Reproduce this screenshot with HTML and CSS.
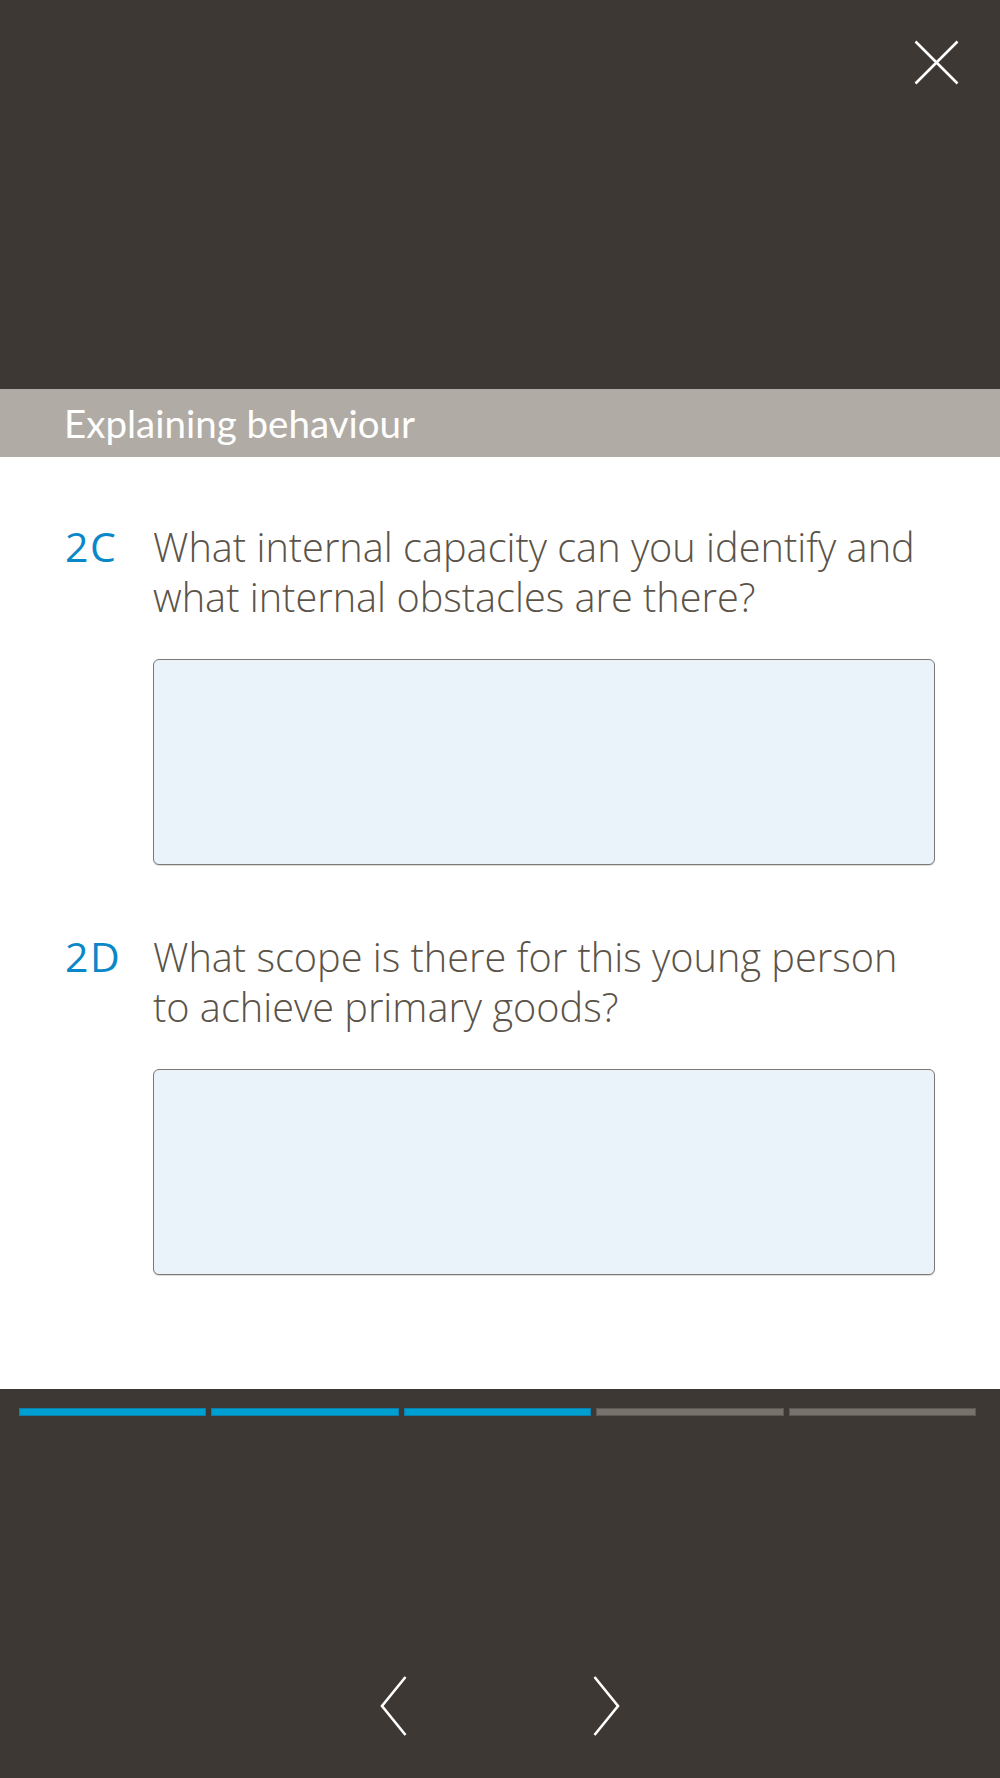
FILE: index.html
```
<!DOCTYPE html>
<html lang="en">
<head>
<meta charset="utf-8">
<title>Explaining behaviour</title>
<link rel="stylesheet" href="styles.css">
</head>
<body>
<div class="screen">
  <header class="top">
    <button class="close" aria-label="Close">
      <svg width="45" height="45" viewBox="0 0 45 45"><path d="M1.5 1.5 L43.5 43.5 M43.5 1.5 L1.5 43.5" stroke="#fff" stroke-width="2.6" fill="none"/></svg>
    </button>
  </header>
  <div class="section-bar">Explaining behaviour</div>
  <main class="content">
    <div class="question">
      <div class="q-num">2C</div>
      <div class="q-body">
        <p class="q-text">What internal capacity can you identify and what internal obstacles are there?</p>
        <textarea class="answer"></textarea>
      </div>
    </div>
    <div class="question">
      <div class="q-num">2D</div>
      <div class="q-body">
        <p class="q-text">What scope is there for this young person to achieve primary goods?</p>
        <textarea class="answer"></textarea>
      </div>
    </div>
  </main>
  <footer class="bottom">
    <div class="progress">
      <span class="seg done"></span>
      <span class="seg done"></span>
      <span class="seg done"></span>
      <span class="seg"></span>
      <span class="seg"></span>
    </div>
    <nav class="nav">
      <button class="arrow" aria-label="Previous">
        <svg width="27" height="60" viewBox="0 0 27 60"><polyline points="25.5,1 2,30 25.5,59" stroke="#fff" stroke-width="2.6" fill="none"/></svg>
      </button>
      <button class="arrow" aria-label="Next">
        <svg width="27" height="60" viewBox="0 0 27 60"><polyline points="1.5,1 25,30 1.5,59" stroke="#fff" stroke-width="2.6" fill="none"/></svg>
      </button>
    </nav>
  </footer>
</div>
</body>
</html>
```
FILE: styles.css
```
* { box-sizing: border-box; }
html, body { margin: 0; padding: 0; }
body {
  background: #ffffff;
  font-family: "Open Sans", "Noto Sans", sans-serif;
}
.screen {
  width: 1000px;
  min-height: 1778px;
  display: flex;
  flex-direction: column;
}
.top {
  height: 389px;
  background: #3d3833;
  display: flex;
  justify-content: flex-end;
  align-items: flex-start;
  padding: 40px 41px 0 0;
}
.close, .arrow {
  background: none;
  border: 0;
  padding: 0;
  margin: 0;
  display: block;
  line-height: 0;
  cursor: pointer;
}
.section-bar {
  height: 68px;
  background: #b1aba5;
  color: #ffffff;
  font-family: "Lato", "Open Sans", sans-serif;
  font-size: 38.5px;
  line-height: 68px;
  padding-left: 64px;
}
.content {
  height: 932px;
  padding: 64px 65px 0 65px;
  display: flex;
  flex-direction: column;
  gap: 66px;
}
.question {
  display: flex;
  align-items: baseline;
}
.q-num {
  width: 88px;
  flex: none;
  color: #0a87c8;
  font-size: 41px;
  letter-spacing: 1.5px;
  line-height: 50px;
}
.q-body {
  flex: 1;
  display: flex;
  flex-direction: column;
}
.q-text {
  margin: 0 0 37px 0;
  color: #5b5348;
  font-weight: 300;
  font-size: 39.7px;
  line-height: 50px;
}
.answer {
  display: block;
  width: 782px;
  height: 206px;
  resize: none;
  background: #eaf2fa;
  border: 1.5px solid #7d7872;
  border-radius: 6px;
  box-shadow: 0 1px 1px rgba(0,0,0,0.15);
  margin: 0;
}
.bottom {
  flex: 1;
  background: #3d3833;
  display: flex;
  flex-direction: column;
  padding: 19px 24px 0 19px;
}
.progress {
  display: flex;
  gap: 5px;
}
.seg {
  flex: 1;
  height: 8px;
  background: #77726b;
  border: 1px solid #5d5953;
}
.seg.done {
  background: #009fd2;
  border-color: #0a80aa;
}
.nav {
  margin-top: 260px;
  display: flex;
  justify-content: center;
  gap: 186px;
  padding-left: 5px;
}
```
